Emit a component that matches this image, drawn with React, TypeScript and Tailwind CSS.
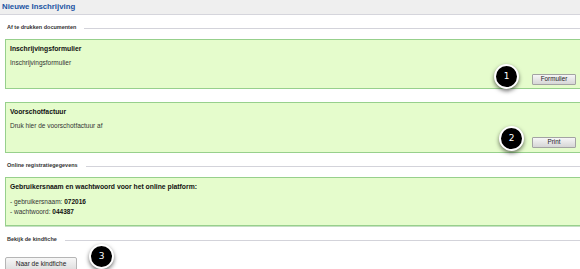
export default function App() {
  return (
    <div className="relative w-[580px] h-[269px] overflow-hidden bg-white font-['Liberation_Sans',Arial,sans-serif] text-[#222]">
      {/* Header */}
      <div className="h-[15px] bg-[#efefef] border-b border-[#d5d5dc] flex items-center px-[2px]">
        <h1 className="text-[7.8px] leading-none font-bold text-[#2153a3]">Nieuwe Inschrijving</h1>
      </div>

      {/* Af te drukken documenten */}
      <SectionLabel className="mt-[8px]" label="Af te drukken documenten" />

      <DocBox
        className="mt-[6px] h-[50px]"
        title="Inschrijvingsformulier"
        text="Inschrijvingsformulier"
        button="Formulier"
        bottomPad="pb-[3px]"
      />

      <DocBox
        className="mt-[13px] h-[51px]"
        title="Voorschotfactuur"
        text="Druk hier de voorschotfactuur af"
        button="Print"
        bottomPad="pb-[4px]"
      />

      {/* Online registratiegegevens */}
      <SectionLabel className="mt-[8px]" label="Online registratiegegevens" />

      <div className="mt-[6px] ml-[5px] mr-[-6px] h-[49px] bg-[#e5fccc] border border-[#97d08c] shadow-[0_1px_0_#c6dfc4] px-[4px] pt-[4px]">
        <p className="text-[6.8px] leading-[10px] font-bold text-[#111]">
          Gebruikersnaam en wachtwoord voor het online platform:
        </p>
        <div className="mt-[5px] text-[6.5px] leading-[10px] text-[#333]">
          <p>
            - gebruikersnaam: <span className="font-bold text-[#111]">072016</span>
          </p>
          <p>
            - wachtwoord: <span className="font-bold text-[#111]">044387</span>
          </p>
        </div>
      </div>

      {/* Bekijk de kindfiche */}
      <SectionLabel className="mt-[9px]" label="Bekijk de kindfiche" />

      <div className="mt-[4px] pl-[5px]">
        <button className="w-[72px] h-[15px] rounded-[2px] border border-[#b5b5b5] bg-gradient-to-b from-[#f7f7f7] to-[#dcdcdc] text-[6.5px] text-[#222] leading-none">
          Naar de kindfiche
        </button>
      </div>

      {/* Step badges */}
      <Badge n="1" className="left-[494px] top-[64px]" />
      <Badge n="2" className="left-[499px] top-[126px]" />
      <Badge n="3" className="left-[89px] top-[244px]" />
    </div>
  );
}

function SectionLabel({ label, className = '' }: { label: string; className?: string }) {
  return (
    <div className={`h-[10px] flex items-center gap-[8px] pl-[7px] ${className}`}>
      <span className="text-[5.5px] leading-none font-bold text-[#333] whitespace-nowrap">{label}</span>
      <div className="flex-1 h-px bg-[#d3d3da]" />
    </div>
  );
}

function DocBox({
  title,
  text,
  button,
  className = '',
  bottomPad,
}: {
  title: string;
  text: string;
  button: string;
  className?: string;
  bottomPad: string;
}) {
  return (
    <div className={`ml-[5px] mr-[-6px] flex flex-col bg-[#e5fccc] border border-[#97d08c] px-[4px] pt-[4px] ${className}`}>
      <p className="text-[6.8px] leading-[10px] font-bold text-[#111]">{title}</p>
      <p className="mt-[4px] text-[6.5px] leading-[10px] text-[#333]">{text}</p>
      <div className={`mt-auto flex justify-end pr-[5px] ${bottomPad}`}>
        <button className="w-[44px] h-[11px] rounded-[1px] border border-[#a3a3a3] bg-gradient-to-b from-[#f6f6f6] to-[#d6d6d6] text-[6.3px] leading-none text-[#222]">
          {button}
        </button>
      </div>
    </div>
  );
}

function Badge({ n, className = '' }: { n: string; className?: string }) {
  return (
    <div
      className={`absolute w-[25px] h-[25px] rounded-full bg-black border-2 border-white shadow-[0_2px_4px_rgba(0,0,0,0.55)] flex items-center justify-center text-white text-[9px] leading-none font-['DejaVu_Sans',sans-serif] ${className}`}
    >
      {n}
    </div>
  );
}
